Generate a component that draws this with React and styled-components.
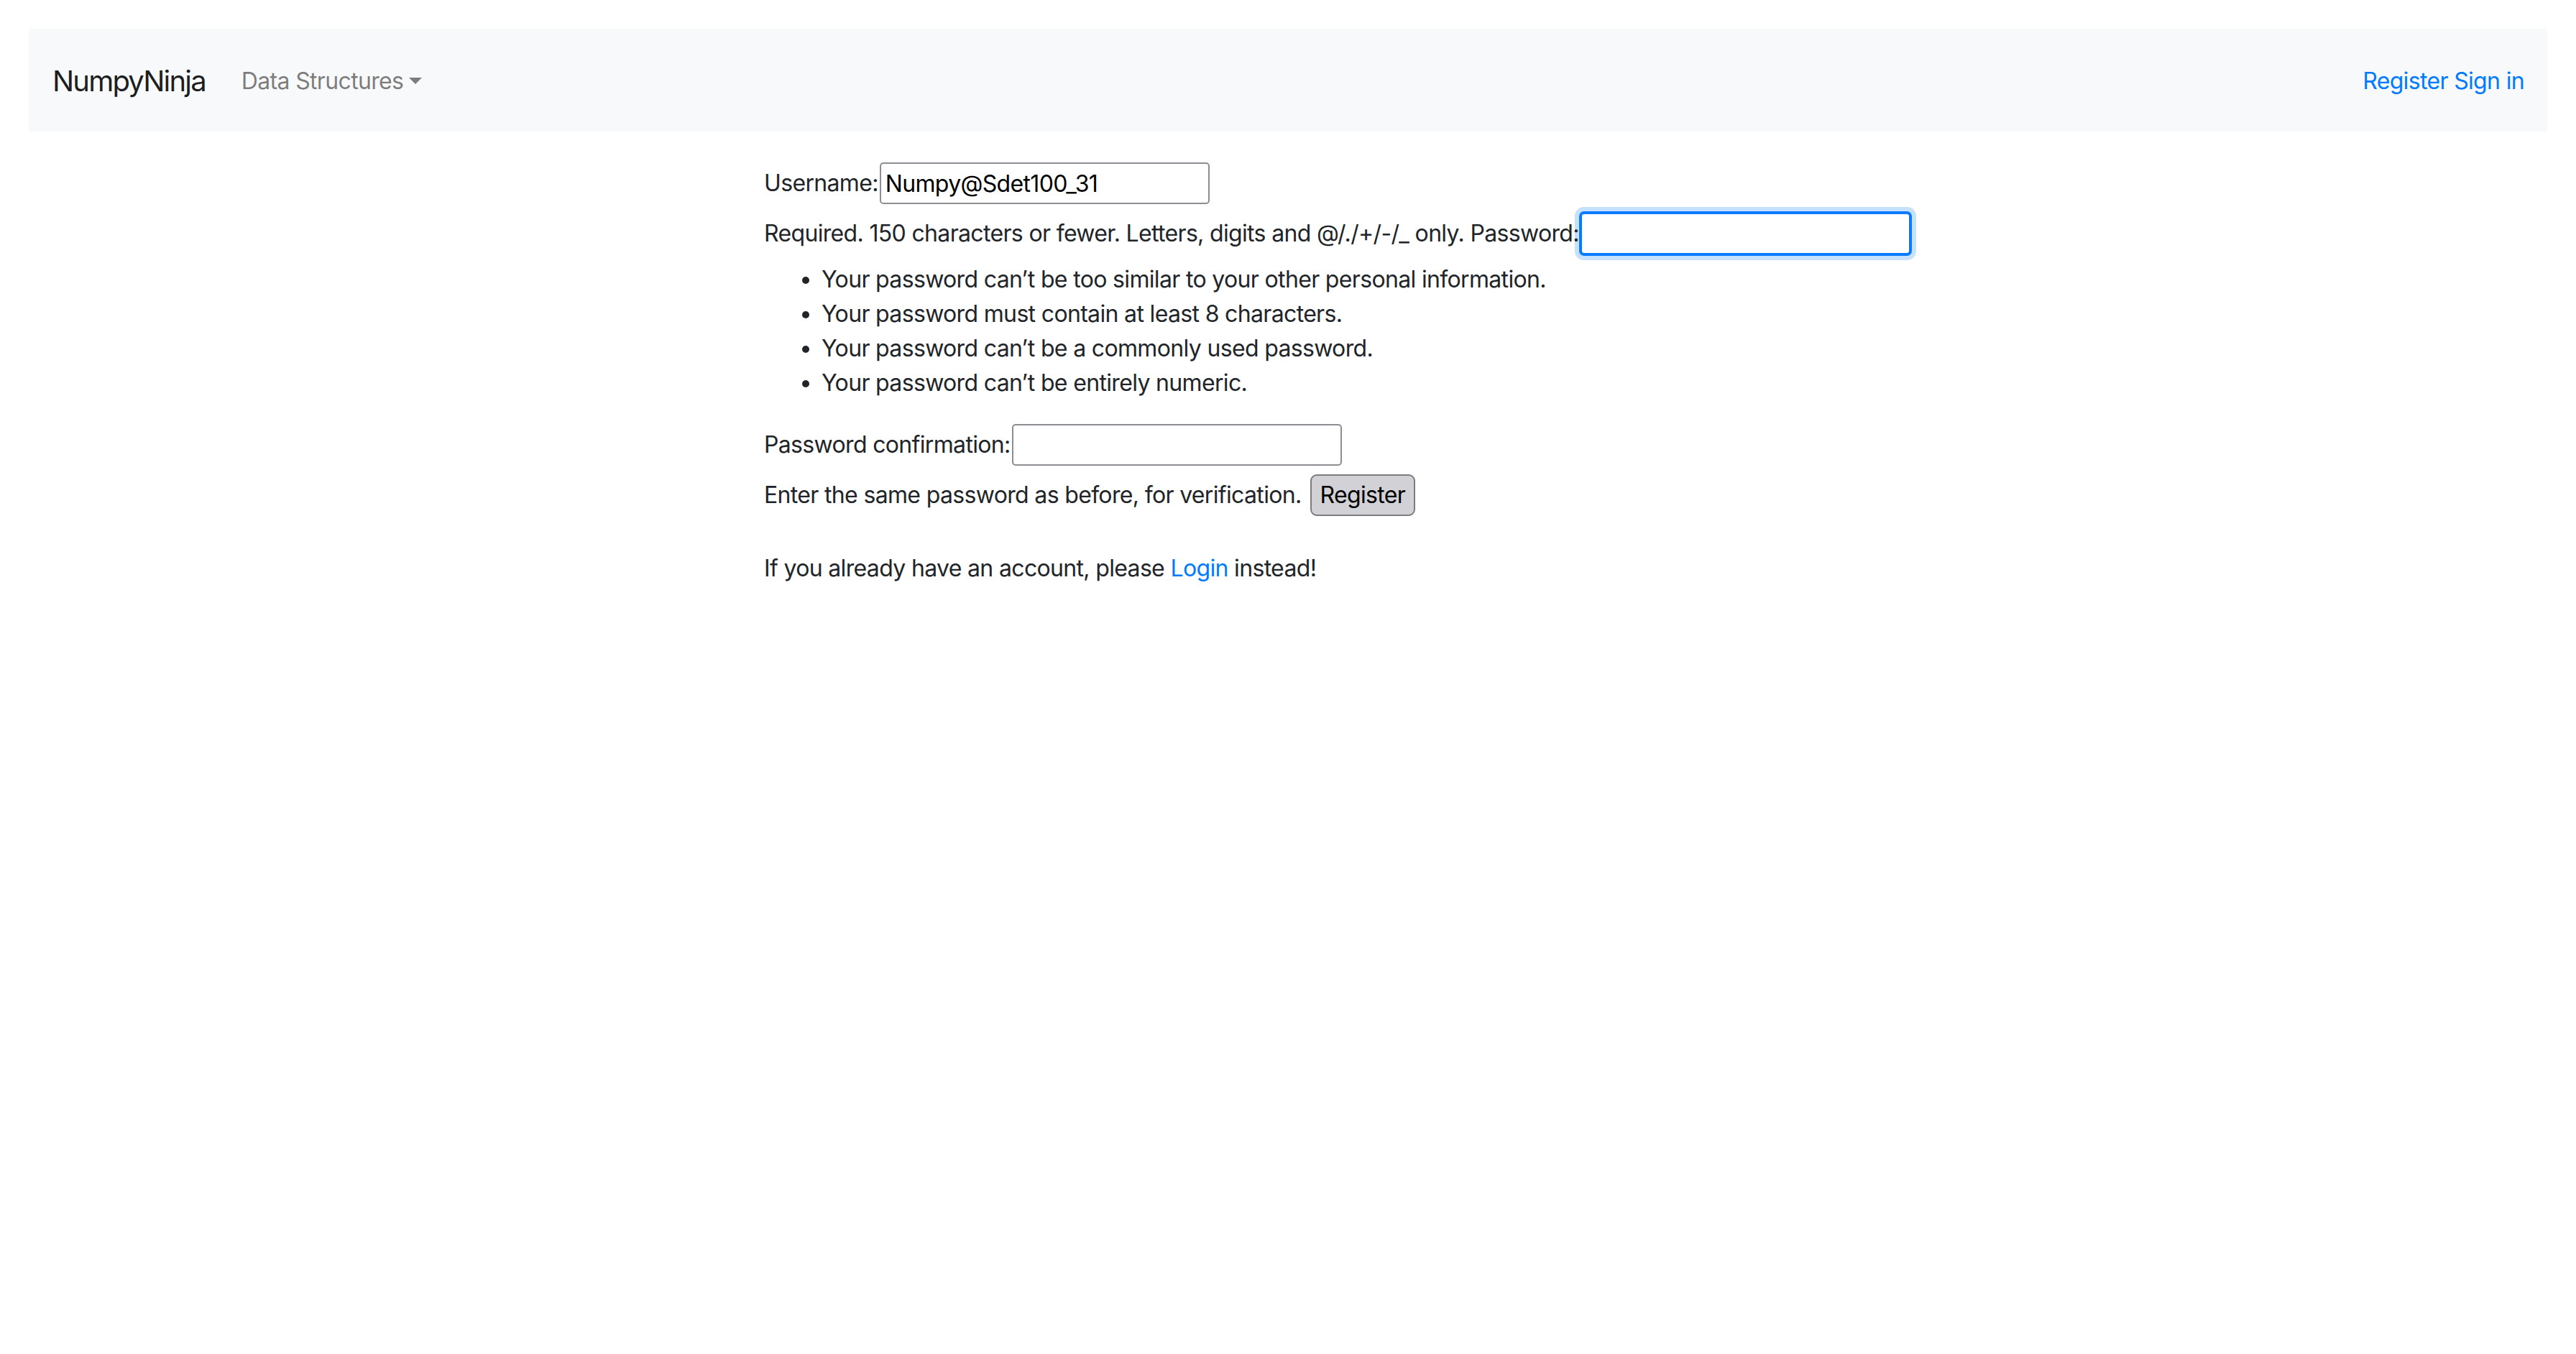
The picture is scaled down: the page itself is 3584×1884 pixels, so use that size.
import React from "react"
import styled, { createGlobalStyle } from "styled-components"

const FONT = `Inter, "Liberation Sans", sans-serif`

const GlobalStyle = createGlobalStyle`
  html, body {
    margin: 0;
    padding: 0;
    background: #fff;
  }
  body {
    font-family: ${FONT};
    font-size: 32px;
    line-height: 48px;
    letter-spacing: -0.66px;
    color: #212529;
  }
  * { box-sizing: border-box; }
`

const Page = styled.div`
  padding: 40px 40px 0;
`

const Navbar = styled.nav`
  height: 143px;
  background: #f8f9fa;
  display: flex;
  align-items: center;
  padding: 3px 32px 0 33px;
`

const Brand = styled.a`
  font-size: 40px;
  line-height: 60px;
  letter-spacing: -1.8px;
  color: rgba(0, 0, 0, 0.9);
  text-decoration: none;
  margin-right: 50px;
`

const NavLink = styled.a`
  color: ${(p) => (p.$muted ? "rgba(0, 0, 0, 0.5)" : "#007bff")};
  text-decoration: none;
  display: inline-flex;
  align-items: center;
`

const Caret = styled.span`
  margin-left: 8px;
  margin-top: -2px;
  border-top: 9.6px solid currentColor;
  border-left: 9.6px solid transparent;
  border-right: 9.6px solid transparent;
`

const Spacer = styled.div`
  flex: 1;
`

const Main = styled.main`
  width: 1458px;
  margin: 0 auto;
  padding-top: 43px;
`

const Row = styled.div`
  display: flex;
  align-items: center;
  white-space: nowrap;
  height: 58px;
  margin-top: ${(p) => p.$gap || 0}px;
`

const Label = styled.span`
  position: relative;
  z-index: 1;
`

const Input = styled.input`
  width: 459px;
  height: 58px;
  border: 2px solid ${(p) => (p.$focused ? "#0a7aff" : "#8e8d93")};
  border-radius: 5px;
  font: inherit;
  letter-spacing: inherit;
  color: #000;
  padding: 0 6px;
  margin-left: 2px;
  outline: none;
  box-shadow: ${(p) =>
    p.$focused ? "0 0 0 2px #0a7aff, 0 0 0 8px #c6e1fd" : "none"};
`

const Button = styled.button`
  height: 58px;
  padding: 0 12px;
  margin-left: 12px;
  font: inherit;
  letter-spacing: inherit;
  color: #000;
  background: #d1d1d6;
  border: 2px solid #7b7b80;
  border-radius: 9px;
`

const Rules = styled.ul`
  margin: 11px 0 0;
  padding-left: 80px;
`

const Note = styled.p`
  margin: 49px 0 0;
`

const Link = styled.a`
  color: #007bff;
  text-decoration: none;
`

export default function App() {
  return (
    <>
      <GlobalStyle />
      <Page>
        <Navbar>
          <Brand href="#">NumpyNinja</Brand>
          <NavLink $muted href="#">
            Data Structures
            <Caret />
          </NavLink>
          <Spacer />
          <NavLink href="#">Register Sign in</NavLink>
        </Navbar>

        <Main>
          <Row>
            <Label>Username:</Label>
            <Input defaultValue="Numpy@Sdet100_31" />
          </Row>
          <Row $gap={12}>
            <Label>
              Required. 150 characters or fewer. Letters, digits and @/./+/-/_ only. Password:
            </Label>
            <Input type="password" $focused />
          </Row>
          <Rules>
            <li>Your password can’t be too similar to your other personal information.</li>
            <li>Your password must contain at least 8 characters.</li>
            <li>Your password can’t be a commonly used password.</li>
            <li>Your password can’t be entirely numeric.</li>
          </Rules>
          <Row $gap={33}>
            <Label>Password confirmation:</Label>
            <Input type="password" />
          </Row>
          <Row $gap={12}>
            <Label>Enter the same password as before, for verification.</Label>
            <Button>Register</Button>
          </Row>
          <Note>
            If you already have an account, please <Link href="#">Login</Link> instead!
          </Note>
        </Main>
      </Page>
    </>
  )
}
